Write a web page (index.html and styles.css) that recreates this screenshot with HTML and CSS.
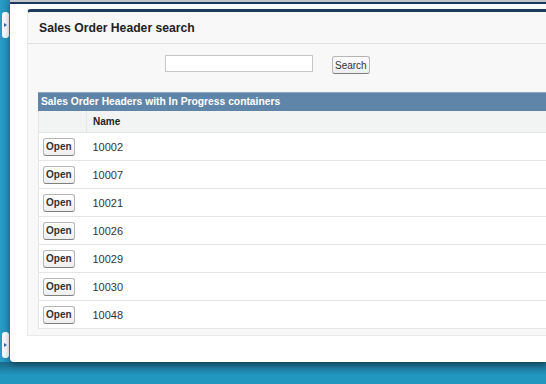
FILE: index.html
```html
<!DOCTYPE html>
<html lang="en">
  <head>
    <meta charset="UTF-8" />
    <meta name="viewport" content="width=device-width, initial-scale=1.0" />
    <title>Sales Order Header search</title>
    <link rel="stylesheet" href="styles.css">
  </head>
  <body>
    <div class="frame">
      <div class="side">
        <div class="handle"><span class="tri"></span></div>
        <div class="handle"><span class="tri"></span></div>
      </div>
      <div class="main">
        <div class="panel">
          <div class="panel-head">
            <h2>Sales Order Header search</h2>
          </div>
          <div class="search-row">
            <input class="search-box" type="text" />
            <button class="btn">Search</button>
          </div>
          <div class="list">
            <div class="list-title">Sales Order Headers with In Progress containers</div>
            <table>
              <tbody>
                <tr class="head-row">
                  <th class="col-action"></th>
                  <th>Name</th>
                </tr>
                <tr><td class="col-action"><button class="btn">Open</button></td><td>10002</td></tr>
                <tr><td class="col-action"><button class="btn">Open</button></td><td>10007</td></tr>
                <tr><td class="col-action"><button class="btn">Open</button></td><td>10021</td></tr>
                <tr><td class="col-action"><button class="btn">Open</button></td><td>10026</td></tr>
                <tr><td class="col-action"><button class="btn">Open</button></td><td>10029</td></tr>
                <tr><td class="col-action"><button class="btn">Open</button></td><td>10030</td></tr>
                <tr><td class="col-action"><button class="btn">Open</button></td><td>10048</td></tr>
              </tbody>
            </table>
          </div>
        </div>
      </div>
    </div>
    <div class="bottom"></div>
  </body>
</html>
```

FILE: styles.css
```css
html, body {
  margin: 0;
  height: 100%;
  overflow: hidden;
}
body {
  background: #2196bf;
  font-family: "Liberation Sans", Arial, sans-serif;
  color: #222;
}
.frame {
  display: flex;
  height: 362px;
}
.side {
  width: 10px;
  background: linear-gradient(to right, #2a9cc6, #1f8db7);
  display: flex;
  flex-direction: column;
  justify-content: space-between;
  padding: 12px 0 4px 2px;
  box-sizing: border-box;
}
.handle {
  width: 7px;
  height: 26px;
  background: #f4f6f8;
  border-radius: 3px;
  display: flex;
  align-items: center;
  justify-content: center;
}
.tri {
  width: 0;
  height: 0;
  border-top: 2px solid transparent;
  border-bottom: 2px solid transparent;
  border-left: 3px solid #2a6fae;
}
.main {
  flex: 1;
  background: #ffffff;
  border-top: 2px solid #c4c8cc;
  border-bottom-left-radius: 4px;
  padding: 7px 0 0 17px;
  box-shadow: inset 0 2px 0 #1c3a5c, 0 3px 6px rgba(0, 0, 0, 0.35);
}
.panel {
  background: #f8f8f8;
  border-top: 3px solid #1c3a5c;
  border-left: 1px solid #eaeaea;
  border-bottom: 1px solid #eaeaea;
  border-top-left-radius: 4px;
  height: 327px;
  box-sizing: border-box;
}
.panel-head {
  height: 31px;
  border-bottom: 1px solid #e0e0e0;
  display: flex;
  align-items: center;
  padding-left: 11px;
}
.panel-head h2 {
  margin: 0;
  font-size: 12.2px;
  font-weight: bold;
  color: #222;
}
.search-row {
  height: 48px;
  box-sizing: border-box;
  display: flex;
  align-items: flex-start;
  padding: 11px 0 0 137px;
  gap: 19px;
}
.search-box {
  width: 148px;
  height: 17px;
  box-sizing: border-box;
  border: 1px solid #c6c6c6;
  background: #fff;
  margin: 0;
  padding: 0;
}
.btn {
  font-family: "Liberation Sans", Arial, sans-serif;
  font-size: 10px;
  font-weight: bold;
  color: #333;
  background: linear-gradient(#ffffff, #eeeeee);
  border: 1px solid #b5b5b5;
  border-bottom-color: #7f7f7f;
  border-radius: 3px;
  padding: 0 2px;
  height: 18px;
}
.search-row .btn {
  font-weight: normal;
  margin-top: 1px;
}
.list {
  margin-left: 10px;
}
.list-title {
  background: #5f86a8;
  border-top: 1px solid #8aa6c0;
  color: #fff;
  font-size: 10.3px;
  font-weight: bold;
  height: 18px;
  line-height: 18px;
  padding-left: 3px;
}
table {
  width: 100%;
  border-collapse: collapse;
  background: #fff;
  border-left: 1px solid #e3e5e7;
}
th, td {
  border-bottom: 1px solid #e3e5e7;
  text-align: left;
  padding: 0 0 0 6px;
}
.head-row th {
  background: #f2f3f3;
  height: 21px;
  font-size: 10px;
  font-weight: bold;
  color: #222;
}
.head-row th.col-action {
  border-right: 1px solid #e3e5e7;
}
td {
  height: 27px;
  font-size: 11px;
  color: #333;
}
.col-action {
  width: 43px;
  padding-left: 4px;
}
.bottom {
  height: 22px;
  background: linear-gradient(#1b6889, #2196bf 60%);
}
```
